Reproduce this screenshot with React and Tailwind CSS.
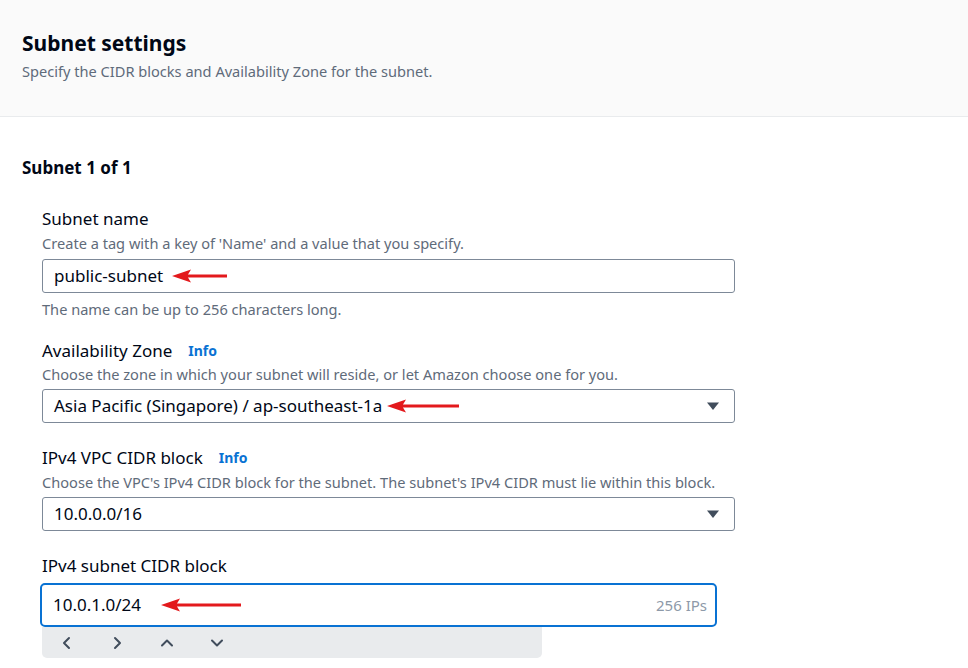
import React from 'react'

const font = { fontFamily: '"Noto Sans", "Open Sans", sans-serif' }

function RedArrow({ width }) {
  return (
    <svg width={width} height="14" viewBox={`0 0 ${width} 14`} className="shrink-0">
      <polygon points="0,7 19,0.5 16,5.5 16,8.5 19,13.5" fill="#e3191c" />
      <rect x="16" y="5.5" width={width - 16} height="3" fill="#e3191c" />
    </svg>
  )
}

function Caret() {
  return (
    <svg width="14" height="10" viewBox="0 0 14 10">
      <polygon points="1,1.5 13,1.5 7,9" fill="#414d5c" />
    </svg>
  )
}

function Chevron({ d }) {
  return (
    <svg width="14" height="14" viewBox="0 0 14 14" fill="none" stroke="#414d5c" strokeWidth="2" strokeLinecap="round" strokeLinejoin="round">
      <path d={d} />
    </svg>
  )
}

function Label({ children, info }) {
  return (
    <div className="flex items-center gap-[16px] text-[17px] leading-[22px] text-[#000716]">
      <span>{children}</span>
      {info && <span className="text-[14px] font-bold text-[#0972d3]">Info</span>}
    </div>
  )
}

function Desc({ children }) {
  return <p className="text-[14.6px] leading-[20px] text-[#5f6b7a]">{children}</p>
}

export default function App() {
  return (
    <div style={font} className="w-[968px] h-[668px] overflow-hidden bg-white">
      <div className="h-[117px] bg-[#fafafa] border-b border-[#e9ebed] px-[22px] pt-[29px]">
        <h2 className="text-[21px] leading-[28px] font-bold text-[#000716]">Subnet settings</h2>
        <p className="text-[14.6px] leading-[20px] text-[#5f6b7a] mt-[4px]">
          Specify the CIDR blocks and Availability Zone for the subnet.
        </p>
      </div>

      <div className="px-[22px] pt-[40px]">
        <h3 className="text-[17px] leading-[22px] font-bold text-[#000716]">Subnet 1 of 1</h3>

        <div className="pl-[20px] pt-[29px] w-[713px]">
          <Label>Subnet name</Label>
          <div className="mt-[3px]">
            <Desc>Create a tag with a key of 'Name' and a value that you specify.</Desc>
          </div>
          <div className="mt-[6px] h-[34px] border border-[#7d8998] rounded-[3px] flex items-center pl-[11px] gap-[9px] text-[17px] text-[#000716]">
            <span>public-subnet</span>
            <RedArrow width={55} />
          </div>
          <div className="mt-[6px]">
            <Desc>The name can be up to 256 characters long.</Desc>
          </div>

          <div className="mt-[21px]">
            <Label info>Availability Zone</Label>
          </div>
          <div className="mt-[2px]">
            <Desc>Choose the zone in which your subnet will reside, or let Amazon choose one for you.</Desc>
          </div>
          <div className="mt-[5px] h-[34px] border border-[#7d8998] rounded-[3px] flex items-center pl-[11px] pr-[14px] text-[17px] text-[#000716]">
            <span>Asia Pacific (Singapore) / ap-southeast-1a</span>
            <span className="ml-[5px] flex"><RedArrow width={72} /></span>
            <span className="ml-auto flex"><Caret /></span>
          </div>

          <div className="mt-[24px]">
            <Label info>IPv4 VPC CIDR block</Label>
          </div>
          <div className="mt-[3px]">
            <Desc>Choose the VPC's IPv4 CIDR block for the subnet. The subnet's IPv4 CIDR must lie within this block.</Desc>
          </div>
          <div className="mt-[5px] h-[34px] border border-[#7d8998] rounded-[3px] flex items-center pl-[11px] pr-[14px] text-[17px] text-[#000716]">
            <span>10.0.0.0/16</span>
            <span className="ml-auto flex"><Caret /></span>
          </div>

          <div className="mt-[24px]">
            <Label>IPv4 subnet CIDR block</Label>
          </div>
          <div className="-ml-[2px] w-[677px] mt-[6px] h-[44px] border-2 border-[#0972d3] rounded-[5px] flex items-center pl-[11px] pr-[8px] text-[17px] text-[#000716]">
            <span>10.0.1.0/24</span>
            <span className="ml-[20px] flex"><RedArrow width={80} /></span>
            <span className="ml-auto text-[15px] text-[#8d99a8]">256 IPs</span>
          </div>
          <div className="w-[500px] h-[31px] bg-[#e9ebed] rounded-b-[5px] flex items-center pl-[18px] gap-[36px]">
            <Chevron d="M9 2 L4 7 L9 12" />
            <Chevron d="M5 2 L10 7 L5 12" />
            <Chevron d="M2 9.5 L7 4.5 L12 9.5" />
            <Chevron d="M2 4.5 L7 9.5 L12 4.5" />
          </div>
        </div>
      </div>
    </div>
  )
}
